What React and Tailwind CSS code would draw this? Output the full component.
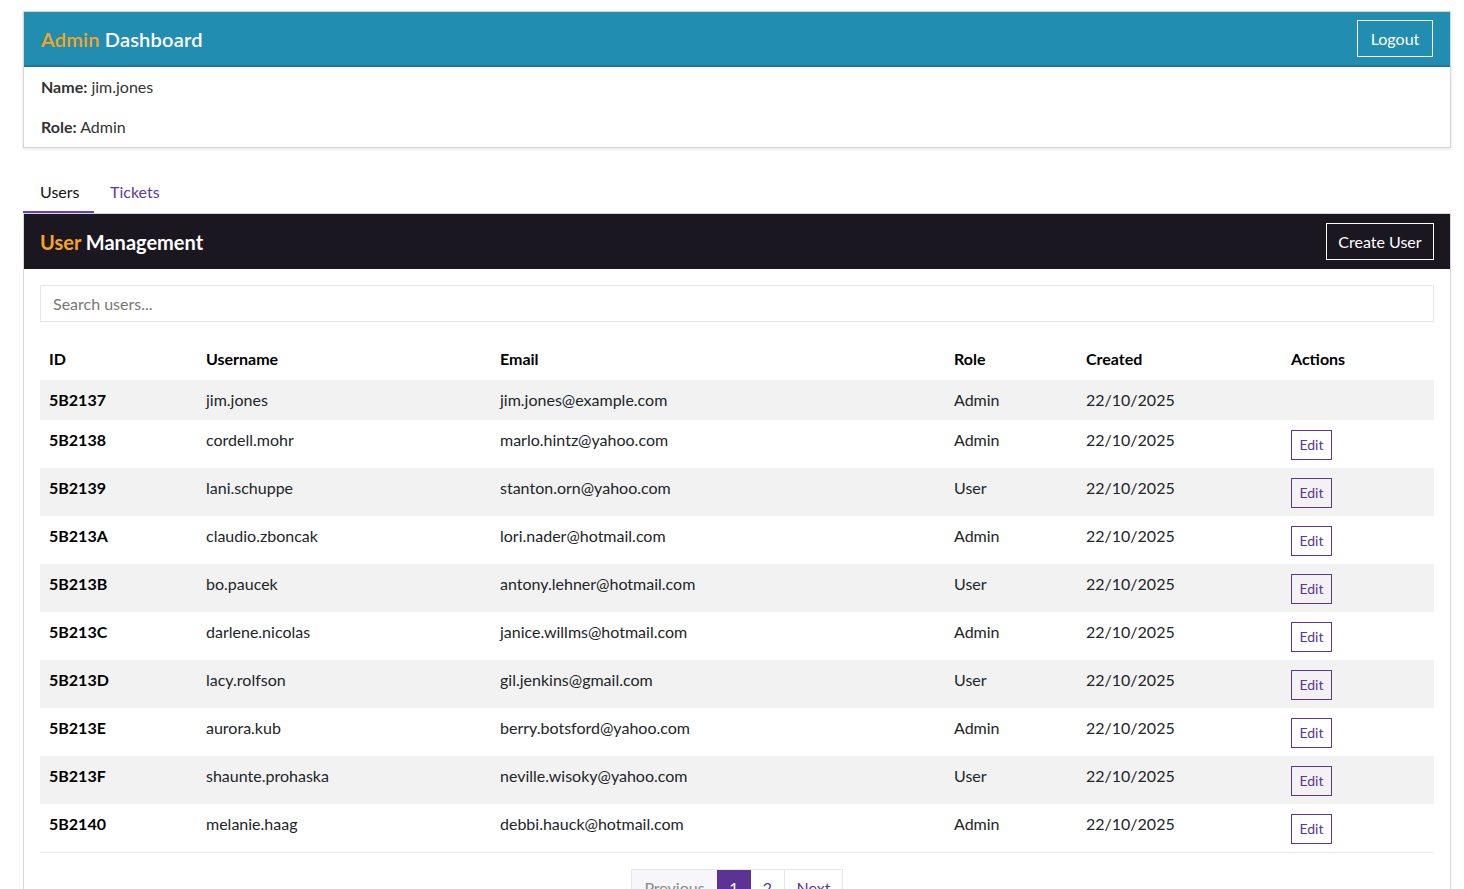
import React, { useState } from "react";

const users = [
  { id: "5B2137", username: "jim.jones", email: "jim.jones@example.com", role: "Admin", created: "22/10/2025", self: true },
  { id: "5B2138", username: "cordell.mohr", email: "marlo.hintz@yahoo.com", role: "Admin", created: "22/10/2025" },
  { id: "5B2139", username: "lani.schuppe", email: "stanton.orn@yahoo.com", role: "User", created: "22/10/2025" },
  { id: "5B213A", username: "claudio.zboncak", email: "lori.nader@hotmail.com", role: "Admin", created: "22/10/2025" },
  { id: "5B213B", username: "bo.paucek", email: "antony.lehner@hotmail.com", role: "User", created: "22/10/2025" },
  { id: "5B213C", username: "darlene.nicolas", email: "janice.willms@hotmail.com", role: "Admin", created: "22/10/2025" },
  { id: "5B213D", username: "lacy.rolfson", email: "gil.jenkins@gmail.com", role: "User", created: "22/10/2025" },
  { id: "5B213E", username: "aurora.kub", email: "berry.botsford@yahoo.com", role: "Admin", created: "22/10/2025" },
  { id: "5B213F", username: "shaunte.prohaska", email: "neville.wisoky@yahoo.com", role: "User", created: "22/10/2025" },
  { id: "5B2140", username: "melanie.haag", email: "debbi.hauck@hotmail.com", role: "Admin", created: "22/10/2025" },
];

const App = () => {
  const [tab, setTab] = useState("users");
  const [search, setSearch] = useState("");

  const filtered = users.filter((u) =>
    u.username.toLowerCase().includes(search.toLowerCase())
  );

  return (
    <div className="min-h-screen bg-white pl-[23px] pr-[13px] pt-[11px] text-[16px] text-[#212529] font-['Lato','Liberation_Sans',sans-serif]">
      {/* Dashboard card */}
      <div className="border border-[#d6d6d6] shadow-[0_1px_3px_rgba(0,0,0,0.12)]">
        <div className="flex items-center justify-between h-[55px] px-[17px] bg-[#218db1] border-b-2 border-[#1b7896]">
          <h1 className="text-[20px] font-semibold tracking-[0.2px]">
            <span className="text-[#f7a51c]">Admin</span> <span className="text-white">Dashboard</span>
          </h1>
          <button className="h-[37px] w-[76px] border border-white text-white">Logout</button>
        </div>
        <div className="px-[17px] py-2 text-[#333]">
          <p className="leading-6"><b className="font-bold">Name:</b> jim.jones</p>
          <p className="leading-6 mt-4"><b className="font-bold">Role:</b> Admin</p>
        </div>
      </div>

      {/* Tabs */}
      <div className="flex mt-[24px] h-[41px]">
        <button
          onClick={() => setTab("users")}
          className={`w-[71px] pl-[17px] text-left border-b-2 ${tab === "users" ? "border-[#6a3fbf] text-[#111]" : "border-transparent text-[#5c3a9e]"}`}
        >
          Users
        </button>
        <button
          onClick={() => setTab("tickets")}
          className={`px-4 border-b-2 ${tab === "tickets" ? "border-[#6a3fbf] text-[#111]" : "border-transparent text-[#5c3a9e]"}`}
        >
          Tickets
        </button>
      </div>

      {/* User management card */}
      <div className="border border-[#d6d6d6]">
        <div className="flex items-center justify-between h-[55px] px-4 bg-[#1b1720]">
          <h2 className="text-[20px] font-bold">
            <span className="text-[#f7a51c]">User</span> <span className="text-white">Management</span>
          </h2>
          <button className="h-[37px] w-[108px] border border-white text-white">Create User</button>
        </div>
        <div className="p-4">
          <input
            type="text"
            placeholder="Search users..."
            value={search}
            onChange={(e) => setSearch(e.target.value)}
            className="w-full h-[37px] px-3 border border-[#e6e6e6] outline-none placeholder:text-[#777]"
          />
          <table className="w-full mt-4 table-fixed border-collapse text-left">
            <colgroup>
              <col className="w-[157px]" />
              <col className="w-[294px]" />
              <col className="w-[454px]" />
              <col className="w-[132px]" />
              <col className="w-[205px]" />
              <col />
            </colgroup>
            <thead>
              <tr>
                {["ID", "Username", "Email", "Role", "Created", "Actions"].map((h) => (
                  <th key={h} className="px-[9px] py-[9px] leading-6 font-bold text-black">{h}</th>
                ))}
              </tr>
            </thead>
            <tbody>
              {filtered.map((u, i) => (
                <tr key={u.id} className={`align-top ${i % 2 === 0 ? "bg-[#f2f2f2]" : "bg-white"} ${i === filtered.length - 1 ? "border-b border-[#e8e8e8]" : ""}`}>
                  <td className="px-[9px] py-2 leading-6 font-bold text-black">{u.id}</td>
                  <td className="px-[9px] py-2 leading-6">{u.username}</td>
                  <td className="px-[9px] py-2 leading-6">{u.email}</td>
                  <td className="px-[9px] py-2 leading-6">{u.role}</td>
                  <td className="px-[9px] py-2 leading-6">{u.created}</td>
                  <td className="px-[9px] pt-[10px] pb-[8px] leading-6">
                    {!u.self && (
                      <button className="block w-[41px] h-[30px] border border-[#5b3596] text-[14px] text-[#5b3596] bg-transparent">Edit</button>
                    )}
                  </td>
                </tr>
              ))}
            </tbody>
          </table>

          {/* Pagination */}
          <div className="flex justify-center mt-4">
            <div className="flex border border-[#e6e6ee] h-[38px]">
              <button className="w-[85px] bg-[#f7f6fb] text-[#888]">Previous</button>
              <button className="w-[34px] bg-[#5c3395] text-white">1</button>
              <button className="w-[34px] border-r border-[#e6e6ee] text-[#5c3395]">2</button>
              <button className="w-[57px] text-[#5c3395]">Next</button>
            </div>
          </div>
        </div>
      </div>
    </div>
  );
};

export default App;
